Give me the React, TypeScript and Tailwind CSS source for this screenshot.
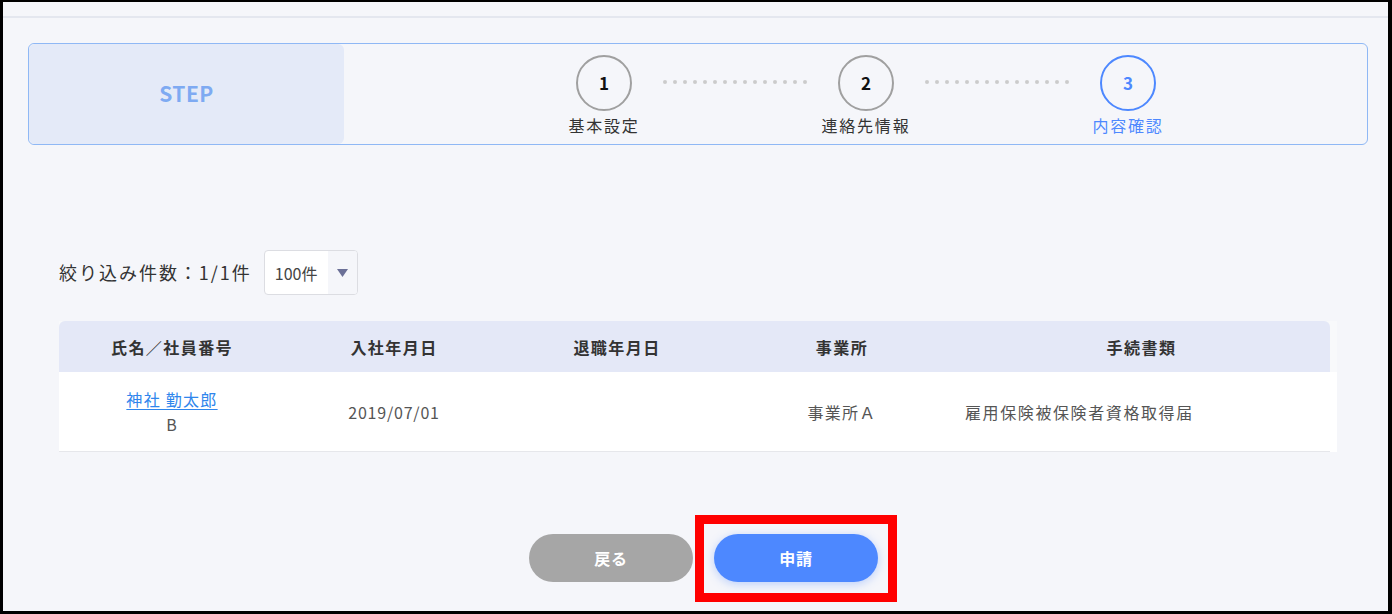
import React from "react";

const font = '"Noto Sans CJK JP", "Noto Sans", sans-serif';

function Dots() {
  return (
    <div className="mx-[31px] mt-[25px] flex w-[144px] justify-between self-start">
      {Array.from({ length: 15 }).map((_, i) => (
        <span key={i} className="block h-[4px] w-[4px] rounded-full bg-[#cbcbcb]" />
      ))}
    </div>
  );
}

function Step({ n, label, active }: { n: number; label: string; active?: boolean }) {
  return (
    <div className="flex w-[56px] flex-col items-center">
      <div
        className={
          "flex h-[56px] w-[56px] items-center justify-center rounded-full border-2 text-[17px] font-bold " +
          (active ? "border-[#4d88ff] text-[#4d88ff]" : "border-[#a0a0a0] text-[#111]")
        }
      >
        {n}
      </div>
      <div
        className={
          "mt-[3px] whitespace-nowrap text-[16px] leading-[22px] tracking-[0.11em] " +
          (active ? "text-[#4d88ff]" : "text-[#333]")
        }
      >
        {label}
      </div>
    </div>
  );
}

export default function App() {
  return (
    <div
      className="h-[614px] w-[1392px] overflow-hidden border-b-[3px] border-l-[3px] border-r-[4px] border-t-[2px] border-black bg-[#f5f6fa]"
      style={{ fontFamily: font }}
    >
      <div className="h-[16px] border-b-2 border-[#e4e7ef]" />

      <div className="px-[25px] pt-[25px]">
        <div className="flex h-[102px] w-[1340px] rounded-[6px] border border-[#8fb8f5]">
          <div className="flex w-[315px] items-center justify-center rounded-[6px] bg-[#e4eaf8]">
            <span className="text-[21px] font-bold tracking-[0.02em] text-[#7eaaf2]">STEP</span>
          </div>
          <div className="flex items-start pl-[232px] pt-[11px]">
            <Step n={1} label="基本設定" />
            <Dots />
            <Step n={2} label="連絡先情報" />
            <Dots />
            <Step n={3} label="内容確認" active />
          </div>
        </div>
      </div>

      <div className="px-[56px]">
        <div className="mt-[105px] flex items-center">
          <span className="text-[18px] tracking-[0.11em] text-[#333]">絞り込み件数：1/1件</span>
          <div className="ml-[12px] flex h-[45px] w-[94px] overflow-hidden rounded-[4px] border border-[#dcdde2] bg-white">
            <div className="flex flex-1 items-center pl-[10px] text-[16px] text-[#444]">100件</div>
            <div className="flex w-[29px] items-center justify-center bg-[#f5f6fa]">
              <svg width="11" height="8" viewBox="0 0 11 8">
                <path d="M0 0 L11 0 L5.5 8 Z" fill="#6b7097" />
              </svg>
            </div>
          </div>
        </div>

        <div className="mt-[26px] w-[1278px] bg-white">
          <div className="flex bg-[#f8f9fb]">
            <div className="flex h-[51px] w-[1271px] items-center rounded-tl-[6px] rounded-tr-[6px] bg-[#e4e8f7] text-[16px] font-bold tracking-[0.09em] text-[#333]">
              <div className="w-[226px] text-center">氏名／社員番号</div>
              <div className="w-[218px] text-center">入社年月日</div>
              <div className="w-[228px] text-center">退職年月日</div>
              <div className="w-[222px] text-center">事業所</div>
              <div className="flex-1 text-center">手続書類</div>
            </div>
          </div>
          <div className="flex h-[79px] w-[1278px] items-center text-[16px] tracking-[0.05em] text-[#555]">
            <div className="flex w-[226px] flex-col items-center leading-[25px]">
              <span className="tracking-[0.08em] text-[#2f86ec] underline underline-offset-[3px]">神社 勤太郎</span>
              <span>B</span>
            </div>
            <div className="w-[218px] text-center">2019/07/01</div>
            <div className="w-[228px] text-center" />
            <div className="w-[222px] text-center tracking-[0.08em]">事業所Ａ</div>
            <div className="flex-1 pl-[12px] tracking-[0.1em]">雇用保険被保険者資格取得届</div>
          </div>
          <div className="h-[1px] w-[1271px] bg-[#e6e7eb]" />
        </div>

        <div className="mt-[82px] flex justify-center gap-[21px] pl-[16px]">
          <button className="h-[48px] w-[164px] rounded-full bg-[#a6a6a6] text-[16px] font-bold tracking-[0.05em] text-white">
            戻る
          </button>
          <div className="relative">
            <button className="h-[48px] w-[164px] rounded-full bg-[#4d88ff] text-[16px] font-bold tracking-[0.05em] text-white shadow-[0_2px_10px_rgba(77,136,255,0.35)]">
              申請
            </button>
            <div className="pointer-events-none absolute bottom-[-20px] left-[-19px] right-[-19px] top-[-19px] border-[9px] border-[#ff0000]" />
          </div>
        </div>
      </div>
    </div>
  );
}
